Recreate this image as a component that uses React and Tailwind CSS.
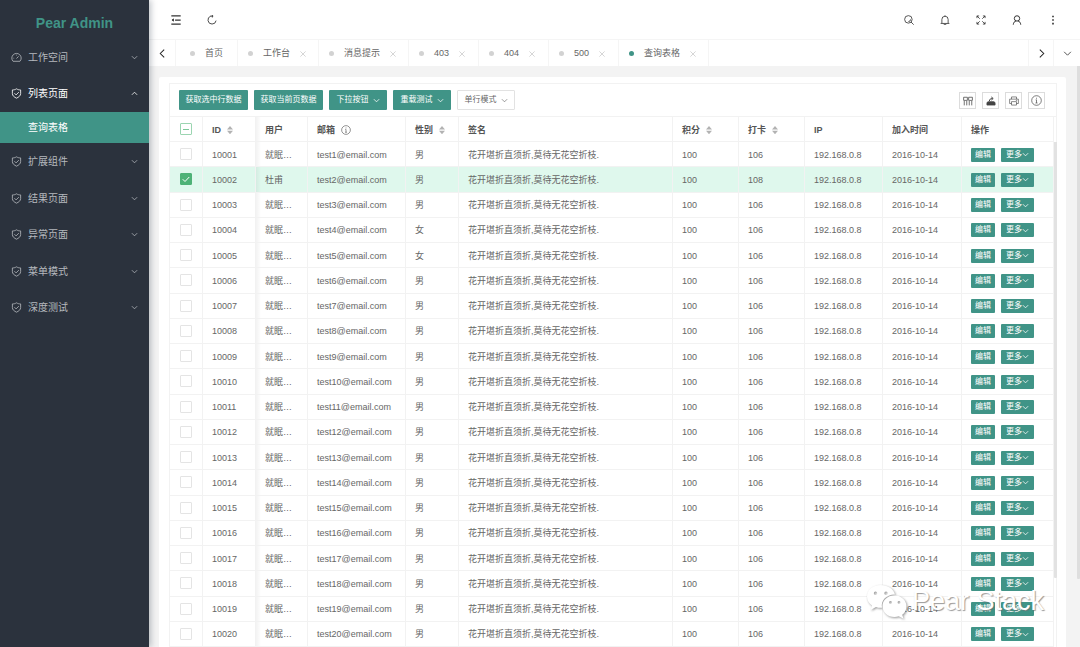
import React, { useState } from 'react';

const teal = 'bg-[#409487]';

const menus = [
  { label: '工作空间', icon: 'gauge' },
  { label: '列表页面', icon: 'shield', open: true, children: ['查询表格'] },
  { label: '扩展组件', icon: 'shield' },
  { label: '结果页面', icon: 'shield' },
  { label: '异常页面', icon: 'shield' },
  { label: '菜单模式', icon: 'shield' },
  { label: '深度测试', icon: 'shield' }
];

const tabs = ['首页', '工作台', '消息提示', '403', '404', '500', '查询表格'];

const rows = Array.from({ length: 20 }, (_, i) => ({
  id: 10001 + i,
  user: i === 1 ? '杜甫' : '就眠儀式',
  email: `test${i + 1}@email.com`,
  sex: i === 3 || i === 4 ? '女' : '男',
  sign: '花开堪折直须折,莫待无花空折枝.',
  score: 100,
  check: i === 1 ? 108 : 106,
  ip: '192.168.0.8',
  date: '2016-10-14'
}));

const columns = [
  { title: 'ID', width: 'w-[53px]', sort: true },
  { title: '用户', width: 'w-[52px]' },
  { title: '邮箱', width: 'w-[98px]', info: true },
  { title: '性别', width: 'w-[53px]', sort: true },
  { title: '签名', width: '' },
  { title: '积分', width: 'w-[66px]', sort: true },
  { title: '打卡', width: 'w-[66px]', sort: true },
  { title: 'IP', width: 'w-[78px]' },
  { title: '加入时间', width: 'w-[79px]' },
  { title: '操作', width: 'w-[92px]' }
];

function Icon({ children, className = 'size-3', width = 1.2 }) {
  return <svg viewBox="0 0 16 16" className={`shrink-0 ${className}`} fill="none" stroke="currentColor" strokeWidth={width} aria-hidden="true">
      {children}
    </svg>;
}

const Chevron = ({ className, width, d = 'M2 5l6 6 6-6' }) => <Icon className={className} width={width}><path d={d} /></Icon>;

const InfoIcon = ({ className }) => <Icon className={className} width={1}>
    <circle cx="8" cy="8" r="7" />
    <path d="M6.8 7H8v4.500M6.500 11.600h3M8 4v1.400" />
  </Icon>;

const menuIcons = {
  gauge: <path d="M3 13.500a6.800 6.800 0 1 1 10 0zM8 9.500l3-3.200M3.600 9h1M8 4v1" />,
  shield: <path d="M8 1.200c2 1.300 4 1.600 6 1.600v5.400c0 3-2.600 5-6 6.600-3.400-1.600-6-3.600-6-6.600V2.800c2 0 4-.3 6-1.600zM5 7.600l2.400 2.400 4-4" />
};

function Sidebar() {
  return <aside className="relative z-10 flex w-[149px] shrink-0 flex-col bg-[#2b323d] text-[#b5b9be] shadow-[2px_0_6px_rgba(0,21,41,0.25)]">
      <h1 className="flex h-[39px] items-center justify-center pt-1.5 text-sm font-bold text-[#409487]">Pear Admin</h1>
      <nav className="flex h-[287px] flex-col">
        {menus.map(menu => <React.Fragment key={menu.label}>
            <button type="button" aria-expanded={!!menu.open} className={`flex flex-1 items-center px-[11px] text-[10px] ${menu.open ? 'text-white' : ''}`}>
              <Icon className="mr-1.5 size-[11px]">{menuIcons[menu.icon]}</Icon>
              <span className="flex-1 text-left">{menu.label}</span>
              <Chevron className="size-[7px]" width={1.8} d={menu.open ? 'M2 11l6-6 6 6' : undefined} />
            </button>
            {menu.children?.map(child => <a key={child} href="#table" className={`flex h-[31px] shrink-0 items-center pl-7 text-[10px] text-white ${teal}`}>{child}</a>)}
          </React.Fragment>)}
      </nav>
    </aside>;
}

function HeaderButton({ label, children }) {
  return <button type="button" aria-label={label} className="flex h-full w-9 items-center justify-center text-[#333]">
      <Icon className="size-[10px]" width={1.3}>{children}</Icon>
    </button>;
}

function Header() {
  return <header className="flex h-10 shrink-0 items-center justify-between border-b border-[#f5f5f5] bg-white px-[9px]">
      <div className="flex h-full">
        <HeaderButton label="收起菜单">
          <path strokeWidth="2" d="M.5 1.500h15M6.500 8h9M.5 14.500h15" />
          <path fill="currentColor" d="M4 6.200v3.600L1.500 8z" />
        </HeaderButton>
        <HeaderButton label="刷新"><path strokeWidth="1.400" d="M6 1.800A6.500 6.500 0 1 0 14.500 9M5.500 1.800H10M8.500 0v4" /></HeaderButton>
      </div>
      <div className="flex h-full">
        <HeaderButton label="搜索">
          <circle cx="7" cy="7" r="6" />
          <path d="M11.200 11.200l4.300 4.300M7 10.500A3.500 3.500 0 0 0 10.500 7" />
        </HeaderButton>
        <HeaderButton label="消息"><path d="M1 13.500h14M3 13V7a5 5 0 0 1 10 0v6M8 .5V2M6.200 14a1.800 1.800 0 0 0 3.600 0" /></HeaderButton>
        <HeaderButton label="全屏"><path d="M1.500 5V1.500H5M1.500 1.500l4.500 4.500M11 1.500h3.500V5M14.500 1.500L10 6M1.500 11v3.500H5M1.500 14.500L6 10M14.500 11v3.500H11M14.500 14.500L10 10" /></HeaderButton>
        <HeaderButton label="用户">
          <circle cx="8" cy="5.500" r="4.300" strokeWidth="1.600" />
          <path strokeWidth="1.600" d="M2 15.500c.3-3.500 2-5.300 4.500-6M14 15.500c-.3-3.500-2-5.300-4.500-6" />
        </HeaderButton>
        <HeaderButton label="更多"><path strokeWidth="2.600" d="M8 1v2.600M8 6.700v2.600M8 12.400V15" /></HeaderButton>
      </div>
    </header>;
}

function TabBar() {
  return <div className="flex h-[26px] shrink-0 bg-white text-[9px] text-[#666]">
      <button type="button" aria-label="向左" className="flex w-[27px] items-center justify-center border-r border-[#f5f5f5] text-[#222]">
        <Chevron className="size-[9px]" width={1.8} d="M11 1L4 8l7 7" />
      </button>
      {tabs.map((tab, i) => <div key={tab} className={`flex items-center gap-2.5 border-r border-[#f5f5f5] pt-px ${i === 0 ? 'px-3.5' : 'min-w-[70px] pr-3 pl-2.5'}`}>
          <span className={`size-[5px] rounded-full ${i === tabs.length - 1 ? teal : 'bg-[#d2d2d2]'}`} />
          <a href="#tab">{tab}</a>
          {i > 0 && <button type="button" aria-label={`关闭${tab}`} className="text-[#c2c2c2]">
              <Icon className="size-1.5" width={1.8}><path d="M1 1l14 14M15 1L1 15" /></Icon>
            </button>}
        </div>)}
      <div className="flex-1" />
      <button type="button" aria-label="向右" className="flex w-[26px] items-center justify-center border-x border-[#f5f5f5] text-[#222]">
        <Chevron className="size-[9px]" width={1.8} d="M5 1l7 7-7 7" />
      </button>
      <button type="button" aria-label="标签操作" className="flex w-[26px] items-center justify-center text-[#444]">
        <Chevron className="size-[9px]" width={1.6} />
      </button>
    </div>;
}

function Toolbar() {
  const main = `flex h-5 items-center justify-center gap-1 rounded-[1px] text-[8px] text-white ${teal}`;
  const tool = 'flex size-[17px] items-center justify-center border border-[#dcdcdc] text-[#444]';
  return <div className="flex h-[33px] items-center justify-between border-b border-[#f2f2f2] pr-[11px] pl-[9px]">
      <div className="flex gap-1.5">
        <button type="button" className={`w-[69px] ${main}`}>获取选中行数据</button>
        <button type="button" className={`w-[69px] ${main}`}>获取当前页数据</button>
        <button type="button" className={`w-[58px] ${main}`}>下拉按钮<Chevron className="size-[7px]" width={1.8} /></button>
        <button type="button" className={`w-[58px] ${main}`}>重载测试<Chevron className="size-[7px]" width={1.8} /></button>
        <button type="button" className="flex h-5 w-[58px] items-center justify-center gap-1 rounded-[1px] border border-[#e2e2e2] text-[8px] text-[#666]">单行模式<Chevron className="size-[7px]" width={1.5} /></button>
      </div>
      <div className="flex gap-1.5 pt-px">
        <button type="button" aria-label="筛选列" className={tool}>
          <Icon className="size-2.5"><path d="M1 2h6v5H1zM9 2h6v5H9zM2 8v7M6 8v7M10 8v7M14 8v7" /></Icon>
        </button>
        <button type="button" aria-label="导出" className={tool}>
          <Icon className="size-2.5">
            <path fill="currentColor" d="M1.500 10.500l2-1.500h9l2 1.500v4h-13z" />
            <path d="M5.500 8c0-2.500 1.500-4 5-4M8.500 1.500l3 2.500-3 2.500" strokeWidth="1.600" />
          </Icon>
        </button>
        <button type="button" aria-label="打印" className={tool}>
          <Icon className="size-2.5" width={1}><path d="M4 5V1.500h8V5M4 12H1V5h14v7h-3M4 9h8v5.500H4zM11 7h2" /></Icon>
        </button>
        <button type="button" aria-label="提示" className={tool}><InfoIcon className="size-[11px]" /></button>
      </div>
    </div>;
}

function Check({ checked, partial, label, onChange }) {
  return <span className="mx-auto grid size-3 place-items-center">
      <input
        type="checkbox"
        aria-label={label}
        checked={checked}
        onChange={onChange}
        className={`col-start-1 row-start-1 size-3 appearance-none rounded-[1px] border ${checked ? 'border-[#4eb277] bg-[#4eb277]' : partial ? 'border-[#9bd5b1] bg-white' : 'border-[#e4e4e4] bg-white'}`}
      />
      {checked && <Icon className="pointer-events-none col-start-1 row-start-1 size-2 text-white" width={2}><path d="M1.500 8.500L6 13l8.500-9" /></Icon>}
      {partial && <span className="pointer-events-none col-start-1 row-start-1 h-px w-1.5 bg-[#7cc798]" />}
    </span>;
}

const SortIcon = () => <svg viewBox="0 0 6 8" className="h-2 w-1.5 fill-[#b2b2b2]" aria-hidden="true">
    <path d="M0 3.400L3 0l3 3.400zM0 4.800h6L3 8.200z" />
  </svg>;

function DataTable() {
  const [selected, setSelected] = useState([10002]);
  const toggle = id => setSelected(selected.includes(id) ? selected.filter(v => v !== id) : [...selected, id]);
  const all = selected.length === rows.length;
  const cell = 'truncate border-r border-b border-[#f2f2f2] pt-px pb-0 pl-[9px]';
  // 固定列右侧的阴影
  const fixedEdge = 'bg-linear-to-r from-black/5 to-transparent to-10%';
  const action = `h-3.5 rounded-[1px] text-[8px] text-white ${teal}`;
  return <div className="flex">
      <div className="min-w-0 flex-1">
        <table id="table" className="h-[530px] w-full table-fixed border-separate border-spacing-0 text-left text-[9px] leading-3 text-[#666]">
          <thead>
            <tr className="h-[25px] text-[#555]">
              <th className="w-[33px] border-r border-b border-[#f2f2f2] p-0">
                <Check label="全选" checked={all} partial={selected.length > 0 && !all} onChange={() => setSelected(all ? [] : rows.map(r => r.id))} />
              </th>
              {columns.map((col, i) => <th key={col.title} className={`${cell} ${col.width} ${i === 1 ? fixedEdge : ''} font-bold`}>
                  <span className="flex items-center gap-1.5">
                    {col.title}
                    {col.sort && <SortIcon />}
                    {col.info && <InfoIcon className="size-2.5" />}
                  </span>
                </th>)}
            </tr>
          </thead>
          <tbody>
            {rows.map(row => <tr key={row.id} className={selected.includes(row.id) ? 'bg-[#dff8ed]' : ''}>
                <td className="border-r border-b border-[#f2f2f2] p-0">
                  <Check label={`选择${row.id}`} checked={selected.includes(row.id)} onChange={() => toggle(row.id)} />
                </td>
                <td className={cell}>{row.id}</td>
                <td className={`${cell} ${fixedEdge} pr-2.5`}>{row.user}</td>
                <td className={cell}>{row.email}</td>
                <td className={cell}>{row.sex}</td>
                <td className={cell}>{row.sign}</td>
                <td className={cell}>{row.score}</td>
                <td className={cell}>{row.check}</td>
                <td className={cell}>{row.ip}</td>
                <td className={cell}>{row.date}</td>
                <td className={cell}>
                  <span className="flex gap-1.5">
                    <button type="button" className={`w-6 ${action}`}>编辑</button>
                    <button type="button" className={`flex w-[33px] items-center justify-center ${action}`}>更多<Chevron className="size-[7px]" width={1.8} /></button>
                  </span>
                </td>
              </tr>)}
          </tbody>
        </table>
      </div>
      <div className="w-0.5 shrink-0 pt-[25px]">
        <div className="h-[436px] w-[3px] rounded-b-[1px] bg-[#e2e2e2]" />
      </div>
    </div>;
}

function Watermark() {
  return <div className="pointer-events-none absolute right-9 bottom-7 flex items-center gap-1 text-[27px] leading-9 text-white [text-shadow:1px_1px_1px_rgba(110,110,110,0.7)]">
      <svg viewBox="0 0 42 36" className="h-9 w-[42px] overflow-visible fill-white drop-shadow-[1px_1px_1px_rgba(110,110,110,0.7)]" aria-hidden="true">
        <path fillRule="evenodd" d="M14.500 2C6.500 2 1 7 1 13.500c0 4 2 7 5 9L4.500 27l5.500-3c2 .7 4 1 6 .8-1.500-8 5-13.500 13-13.300C27.500 5.500 21.500 2 14.500 2zM9.500 8.500a1.700 1.700 0 1 1 0 3.400 1.700 1.700 0 0 1 0-3.400zM20 8.500a1.700 1.700 0 1 1 0 3.400 1.700 1.700 0 0 1 0-3.400z" />
        <path fillRule="evenodd" d="M28.500 12.500c-7 0-12 5-12 10.700s5 10.800 12 10.800c1.500 0 3-.2 4.300-.7l4.700 2.500-1.300-4c2.600-2 4.300-5 4.300-8.600 0-5.700-5-10.700-12-10.700zM24.500 18a1.400 1.400 0 1 1 0 2.800 1.400 1.400 0 0 1 0-2.800zM33 18a1.400 1.400 0 1 1 0 2.800 1.400 1.400 0 0 1 0-2.800z" />
      </svg>
      Pear Stack
    </div>;
}

export default function App() {
  return <div className="relative flex h-screen overflow-hidden bg-[#f3f3f3] font-['Liberation_Sans','Noto_Sans_CJK_SC',sans-serif]">
      <Sidebar />
      <div className="flex min-w-0 flex-1 flex-col">
        <Header />
        <TabBar />
        <div className="flex min-h-0 flex-1 overflow-hidden">
          <main className="min-w-0 flex-1 pt-[11px] pr-[11px] pl-2.5">
            <div className="rounded-t-[2px] bg-white pt-1.5 pr-[9px] pl-2.5">
              <div className="border border-b-0 border-[#f2f2f2]">
                <Toolbar />
                <DataTable />
              </div>
            </div>
          </main>
          <div className="h-[513px] w-[3px] shrink-0 rounded-b-[1px] bg-[#dedede]" />
        </div>
      </div>
      <Watermark />
    </div>;
}
